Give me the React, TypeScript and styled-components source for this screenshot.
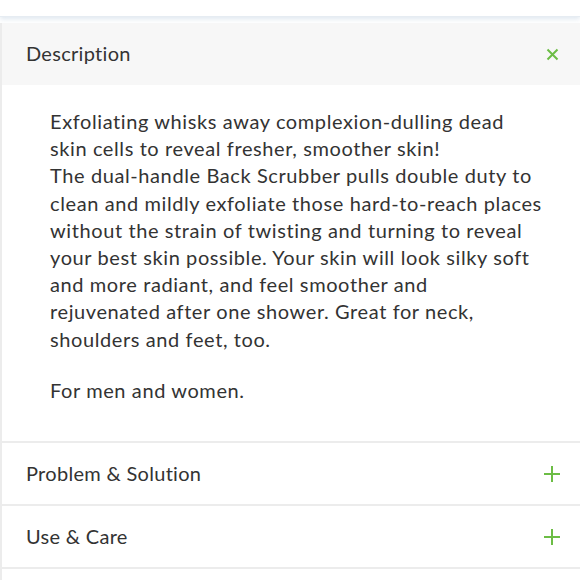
import styled, { createGlobalStyle } from 'styled-components';

const GlobalStyle = createGlobalStyle`
  html, body {
    margin: 0;
    padding: 0;
    background: #ffffff;
  }
  body {
    font-family: Lato, "Noto Sans", sans-serif;
    color: #333333;
  }
`;

interface ISection {
  title: string;
  open: boolean;
}

const sections: ISection[] = [
  { title: 'Problem & Solution', open: false },
  { title: 'Use & Care', open: false },
];

function App() {
  return (
    <Page>
      <GlobalStyle />
      <TopBar />
      <Accordion>
        <Header $open>
          <Title>Description</Title>
          <Toggle>
            <CloseIcon />
          </Toggle>
        </Header>
        <Body>
          <Para>
            Exfoliating whisks away complexion-dulling dead skin cells to reveal fresher, smoother skin!
            <br />
            The dual-handle Back Scrubber pulls double duty to clean and mildly exfoliate those
            hard-to-reach places without the strain of twisting and turning to reveal your best skin
            possible. Your skin will look silky soft and more radiant, and feel smoother and
            rejuvenated after one shower. Great for neck, shoulders and feet, too.
          </Para>
          <Para>For men and women.</Para>
        </Body>
        {sections.map((s) => (
          <Header key={s.title} $open={s.open}>
            <Title>{s.title}</Title>
            <Toggle>
              <PlusIcon />
            </Toggle>
          </Header>
        ))}
        <Rest />
      </Accordion>
    </Page>
  );
}

const CloseIcon = () => (
  <svg width="13" height="13" viewBox="0 0 13 13">
    <path d="M1.5 1.5 L11.5 11.5 M11.5 1.5 L1.5 11.5" stroke="#6cbd45" strokeWidth="2" />
  </svg>
);

const PlusIcon = () => (
  <svg width="16" height="16" viewBox="0 0 16 16">
    <path d="M8 0 V16 M0 8 H16" stroke="#6cbd45" strokeWidth="2" />
  </svg>
);

const Page = styled.div`
  width: 580px;
  height: 580px;
  overflow: hidden;
`;
const TopBar = styled.div`
  height: 16px;
  border-bottom: 1px solid #e6ecf2;
  box-shadow: 0 2px 5px rgba(200, 214, 228, 0.6);
  background: #ffffff;
`;
const Accordion = styled.div`
  margin-top: 6px;
  border-left: 2px solid #ececec;
`;
const Header = styled.div<{ $open?: boolean }>`
  display: flex;
  align-items: center;
  justify-content: space-between;
  height: ${(p) => (p.$open ? '62px' : '61px')};
  padding: 0 20px 0 24px;
  background: ${(p) => (p.$open ? '#f7f7f7' : '#ffffff')};
  border-bottom: ${(p) => (p.$open ? 'none' : '2px solid #ececec')};
`;
const Title = styled.div`
  font-size: 20px;
  color: #333333;
  letter-spacing: 0.3px;
  padding-bottom: 2px;
`;
const Toggle = styled.div`
  display: flex;
  align-items: center;
  justify-content: center;
  width: 16px;
  height: 16px;
`;
const Body = styled.div`
  padding: 23px 38px 37px 48px;
  border-bottom: 2px solid #ececec;
`;
const Para = styled.p`
  margin: 0 0 24px;
  font-size: 20px;
  letter-spacing: 0.6px;
  line-height: 27.2px;
  color: #333333;
  &:last-child {
    margin-bottom: 0;
  }
`;
const Rest = styled.div`
  height: 20px;
`;

export default App;
